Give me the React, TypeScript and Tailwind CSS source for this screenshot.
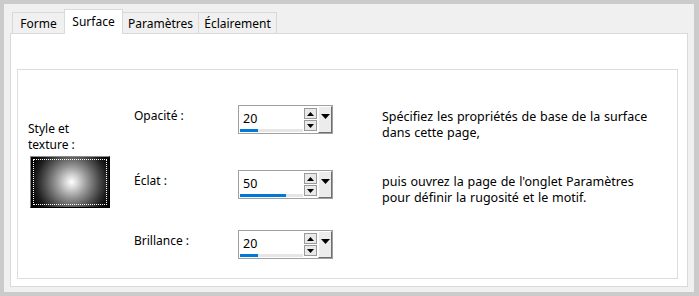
const tabs = [
  { label: "Forme", w: "w-[53px]" },
  { label: "Surface", w: "w-[59px]", active: true },
  { label: "Paramètres", w: "w-[77px]" },
  { label: "Éclairement", w: "w-[79px]" },
];

const fields = [
  { label: "Opacité :", value: 20, bar: "w-[18px]", mt: "mt-0" },
  { label: "Éclat :", value: 50, bar: "w-[46px]", mt: "mt-[36px]" },
  { label: "Brillance :", value: 20, bar: "w-[18px]", mt: "mt-[31px]" },
];

function Arrow({ up }: { up?: boolean }) {
  return (
    <svg width="7" height="4" viewBox="0 0 7 4" className="block">
      {up ? <polygon points="0,4 7,4 3.5,0" fill="#000" /> : <polygon points="0,0 7,0 3.5,4" fill="#000" />}
    </svg>
  );
}

function SpinBox({ value, bar }: { value: number; bar: string }) {
  return (
    <div className="flex w-[95px] h-[29px] border border-[#a0a0a0] bg-white">
      <div className="flex flex-col flex-1 pl-px pb-px">
        <div className="pl-[3px] pt-[5px] leading-[16px] text-[12.5px] text-black">{value}</div>
        <div className="mt-auto h-[3px] w-[63px] bg-[#e6e6e6]">
          <div className={`h-full ${bar} bg-[#0078d7]`} />
        </div>
      </div>
      <div className="flex flex-col gap-px pt-[2px] w-[14px]">
        <div className="flex items-center justify-center w-[13px] h-[11px] border border-[#9a9a9a] bg-[#e9e9e9]">
          <Arrow up />
        </div>
        <div className="flex items-center justify-center w-[13px] h-[11px] border border-[#9a9a9a] bg-[#e9e9e9]">
          <Arrow />
        </div>
      </div>
      <div className="flex justify-center pt-[7px] w-[14px] h-full bg-[#ececec] border-t border-l border-white border-r border-b border-r-[#6e6e6e] border-b-[#6e6e6e]">
        <svg width="9" height="5" viewBox="0 0 9 5" className="block">
          <polygon points="0,0 9,0 4.5,5" fill="#000" />
        </svg>
      </div>
    </div>
  );
}

export default function App() {
  return (
    <div className="w-[699px] h-[296px] bg-[#cbcbcb] pt-[4px] pl-[4px] pb-[4px] pr-[5px] font-['Segoe_UI','Noto_Sans',sans-serif] text-[12px] text-black">
      <div className="flex flex-col h-full bg-[#f0f0f0] pl-[6px] pr-[6px] pb-[5px] pt-[5px]">
        {/* Tabs */}
        <div className="flex items-end pl-[2px]">
          {tabs.map((t, i) =>
            t.active ? (
              <div
                key={t.label}
                className={`relative z-10 ${t.w} h-[25px] -mb-px ${i ? "-ml-px" : ""} border border-b-0 border-[#d9d9d9] bg-white pt-[4px] text-center leading-[16px]`}
              >
                {t.label}
              </div>
            ) : (
              <div
                key={t.label}
                className={`${t.w} h-[21px] ${i ? "-ml-px" : ""} border border-b-0 border-[#d9d9d9] bg-[#f0f0f0] pt-[3px] text-center leading-[16px]`}
              >
                {t.label}
              </div>
            )
          )}
        </div>

        {/* Panel */}
        <div className="flex flex-col flex-1 border border-[#d9d9d9] bg-white">
          <div className="flex flex-1 ml-[6px] mr-[9px] mt-[35px] mb-[7px] border border-[#dcdcdc] pl-[10px] leading-[16px]">
            {/* Style et texture */}
            <div className="w-[106px] pt-[51px]">
              <div>
                Style et
                <br />
                texture :
              </div>
              <div className="ml-[2px] mt-[3px] w-[80px] h-[52px] p-[2px] border border-black border-t-[#8a8a8a] border-l-[#8a8a8a] bg-[radial-gradient(circle_at_52%_50%,#ffffff_0px,#d8d8d8_6px,#9a9a9a_15px,#555555_26px,#1a1a1a_36px,#000000_44px)]">
                <div className="w-full h-full border border-dotted border-white" />
              </div>
            </div>

            {/* Fields */}
            <div className="flex flex-col pt-[35px]">
              {fields.map((f) => (
                <div key={f.label} className={`flex ${f.mt}`}>
                  <div className="w-[104px] pt-[3px]">{f.label}</div>
                  <SpinBox value={f.value} bar={f.bar} />
                </div>
              ))}
            </div>

            {/* Help text */}
            <div className="ml-[49px] pt-[39px] text-[12.5px] [word-spacing:0.5px]">
              <div className="h-[31px] overflow-hidden">
                Spécifiez les propriétés de base de la surface
                <br />
                dans cette page,
              </div>
              <div className="mt-[34px]">
                puis ouvrez la page de l'onglet Paramètres
                <br />
                pour définir la rugosité et le motif.
              </div>
            </div>
          </div>
        </div>
      </div>
    </div>
  );
}
